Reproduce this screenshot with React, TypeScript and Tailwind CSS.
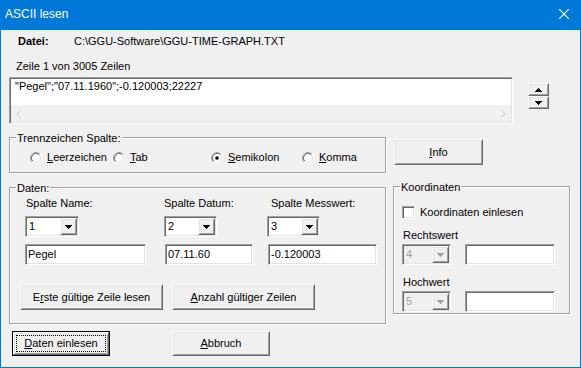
import React from "react";

const sunken =
  "border border-t-[#a0a0a0] border-l-[#a0a0a0] border-b-white border-r-white shadow-[inset_1px_1px_0_#696969,inset_-1px_-1px_0_#e3e3e3] p-[1px]";
const raised =
  "border border-t-white border-l-white border-b-[#696969] border-r-[#696969] shadow-[inset_1px_1px_0_#e3e3e3,inset_-1px_-1px_0_#a0a0a0]";

function Arrow({ up = false, color = "#000" }: { up?: boolean; color?: string }) {
  return (
    <svg width="7" height="4" viewBox="0 0 7 4" shapeRendering="crispEdges" className={up ? "rotate-180" : ""}>
      <path d="M0 0h7v1H0z M1 1h5v1H1z M2 2h3v1H2z M3 3h1v1H3z" fill={color} />
    </svg>
  );
}

function Radio({ checked = false }: { checked?: boolean }) {
  return (
    <svg width="12" height="12" viewBox="0 0 12 12" className="shrink-0">
      <circle cx="6" cy="6" r="4.5" fill="#fff" />
      <path d="M2.11 9.89A5.5 5.5 0 0 1 9.89 2.11" stroke="#a0a0a0" fill="none" />
      <path d="M9.89 2.11A5.5 5.5 0 0 1 2.11 9.89" stroke="#fff" fill="none" />
      <path d="M2.82 9.18A4.5 4.5 0 0 1 9.18 2.82" stroke="#696969" fill="none" />
      <path d="M9.18 2.82A4.5 4.5 0 0 1 2.82 9.18" stroke="#e3e3e3" fill="none" />
      {checked && <circle cx="6" cy="6" r="1.8" fill="#000" />}
    </svg>
  );
}

function Group({ label, className = "", children }: { label: string; className?: string; children?: React.ReactNode }) {
  return (
    <div className={`relative border border-[#a0a0a0] shadow-[inset_1px_1px_0_#fff,1px_1px_0_#fff] ${className}`}>
      <span className="absolute top-[-6px] left-[6px] px-[1px] bg-[#f0f0f0] leading-[13px] whitespace-nowrap">{label}</span>
      {children}
    </div>
  );
}

function Combo({ value, w, disabled = false, className = "" }: { value: string; w: string; disabled?: boolean; className?: string }) {
  return (
    <div className={`${sunken} ${w} h-[21px] flex ${disabled ? "bg-[#f0f0f0]" : "bg-white"} ${className}`}>
      <span className={`flex-1 pl-[2px] leading-[17px] ${disabled ? "text-[#a0a0a0]" : ""}`}>{value}</span>
      <div className={`${raised} w-[17px] h-[17px] bg-[#f0f0f0] flex items-center justify-center`}>
        <Arrow color={disabled ? "#a0a0a0" : "#000"} />
      </div>
    </div>
  );
}

function Field({ value = "", w, className = "" }: { value?: string; w: string; className?: string }) {
  return (
    <div className={`${sunken} ${w} h-[21px] bg-white pl-[2px] leading-[17px] ${className}`}>{value}</div>
  );
}

function Button({ children, w, h = "h-[25px]", className = "" }: { children: React.ReactNode; w: string; h?: string; className?: string }) {
  return (
    <div className={`${raised} ${w} ${h} bg-[#f0f0f0] flex items-center justify-center ${className}`}>{children}</div>
  );
}

function U({ children }: { children: React.ReactNode }) {
  return <span className="underline decoration-1 underline-offset-[1px]">{children}</span>;
}

export default function App() {
  return (
    <div className="w-[581px] h-[368px] bg-[#f0f0f0] border border-t-0 border-[#0078d7] flex flex-col overflow-hidden text-[11px] leading-[13px] text-black font-['Liberation_Sans',Arial,sans-serif]">
      {/* Title bar */}
      <div className="h-[30px] shrink-0 bg-[#0078d7] flex items-center justify-between pl-[4px] pr-[11px] pb-[2px] text-white">
        <span className="text-[12px] leading-[16px]">ASCII lesen</span>
        <svg width="10" height="10" viewBox="0 0 10 10">
          <path d="M0 0L10 10M10 0L0 10" stroke="#fff" strokeWidth="1.1" />
        </svg>
      </div>

      {/* Body */}
      <div className="flex flex-col pl-[8px]">
        {/* Datei */}
        <div className="mt-[5px] flex h-[13px] ml-[9px]">
          <span className="w-[56px] font-bold">Datei:</span>
          <span>C:\GGU-Software\GGU-TIME-GRAPH.TXT</span>
        </div>

        {/* Zeile */}
        <div className="mt-[12px] ml-[7px] h-[13px]">Zeile 1 von 3005 Zeilen</div>

        {/* Edit + spinner */}
        <div className="mt-[4px] flex items-start">
          <div className={`${sunken} w-[504px] h-[47px] bg-white flex flex-col`}>
            <div className="pl-[4px] pt-[1px] flex-1 whitespace-nowrap">"Pegel";"07.11.1960";-0.120003;22227</div>
            <div className="h-[17px] bg-[#f0f0f0] flex items-center justify-between px-[5px]">
              <svg width="5" height="8" viewBox="0 0 5 8">
                <path d="M4.5 0.5L1 4L4.5 7.5" stroke="#c4c4c4" fill="none" />
              </svg>
              <svg width="5" height="8" viewBox="0 0 5 8">
                <path d="M0.5 0.5L4 4L0.5 7.5" stroke="#c4c4c4" fill="none" />
              </svg>
            </div>
          </div>
          <div className="ml-[15px] mt-[6px] w-[21px] h-[26px] flex flex-col">
            <div className={`${raised} h-[13px] bg-[#f0f0f0] flex items-center justify-center`}>
              <Arrow up />
            </div>
            <div className={`${raised} h-[13px] bg-[#f0f0f0] flex items-center justify-center`}>
              <Arrow />
            </div>
          </div>
        </div>

        {/* Trennzeichen + Info */}
        <div className="mt-[13px] flex items-start">
          <Group label="Trennzeichen Spalte:" className="w-[377px] h-[36px]">
            <div className="pt-[13px] pl-[20px] flex h-[26px]">
              <div className="w-[83px] flex items-center gap-[5px]">
                <Radio />
                <span><U>L</U>eerzeichen</span>
              </div>
              <div className="w-[98px] flex items-center gap-[5px]">
                <Radio />
                <span><U>T</U>ab</span>
              </div>
              <div className="w-[91px] flex items-center gap-[5px]">
                <Radio checked />
                <span><U>S</U>emikolon</span>
              </div>
              <div className="flex items-center gap-[5px]">
                <Radio />
                <span><U>K</U>omma</span>
              </div>
            </div>
          </Group>
          <Button w="w-[89px]" h="h-[26px]" className="ml-[8px] mt-[2px]">
            <U>I</U>nfo
          </Button>
        </div>

        {/* Daten + Koordinaten */}
        <div className="mt-[14px] flex items-start">
          <Group label="Daten:" className="w-[377px] h-[137px]">
            <div className="flex pl-[15px]">
              <div className="w-[139px] flex flex-col">
                <span className="mt-[9px] ml-[1px]">Spalte Name:</span>
                <Combo value="1" w="w-[54px]" className="mt-[6px]" />
                <Field value="Pegel" w="w-[121px]" className="mt-[7px]" />
              </div>
              <div className="w-[103px] flex flex-col">
                <span className="mt-[9px]">Spalte Datum:</span>
                <Combo value="2" w="w-[53px]" className="mt-[6px]" />
                <Field value="07.11.60" w="w-[88px]" className="mt-[7px] ml-[1px]" />
              </div>
              <div className="flex flex-col">
                <span className="mt-[9px] ml-[4px]">Spalte Messwert:</span>
                <Combo value="3" w="w-[53px]" className="mt-[6px]" />
                <Field value="-0.120003" w="w-[109px]" className="mt-[7px] ml-[1px]" />
              </div>
            </div>
            <div className="mt-[19px] ml-[10px] flex gap-[9px]">
              <Button w="w-[143px]" h="h-[26px]">
                <span>E<U>r</U>ste gültige Zeile lesen</span>
              </Button>
              <Button w="w-[143px]" h="h-[26px]">
                <span><U>A</U>nzahl gültiger Zeilen</span>
              </Button>
            </div>
          </Group>

          <Group label="Koordinaten" className="ml-[7px] mt-[-1px] w-[177px] h-[128px]">
            <div className="flex flex-col pl-[8px]">
              <div className="mt-[19px] flex items-center gap-[5px] h-[13px]">
                <div className={`${sunken} w-[13px] h-[13px] bg-white`} />
                <span>Koordinaten einlesen</span>
              </div>
              <span className="mt-[10px] ml-[1px]">Rechtswert</span>
              <div className="mt-[2px] flex">
                <Combo value="4" w="w-[49px]" disabled />
                <Field w="w-[90px]" className="ml-[14px]" />
              </div>
              <span className="mt-[11px] ml-[1px]">Hochwert</span>
              <div className="mt-[2px] flex">
                <Combo value="5" w="w-[49px]" disabled />
                <Field w="w-[90px]" className="ml-[14px]" />
              </div>
            </div>
          </Group>
        </div>

        {/* Bottom buttons */}
        <div className="mt-[7px] flex">
          <div className="ml-[3px] w-[98px] h-[25px] border border-black">
            <div className={`${raised} h-full bg-[#f0f0f0] p-[2px]`}>
              <div className="h-full border border-dotted border-black flex items-center justify-center">
                <span><U>D</U>aten einlesen</span>
              </div>
            </div>
          </div>
          <Button w="w-[98px]" className="ml-[62px]">
            <span><U>A</U>bbruch</span>
          </Button>
        </div>
      </div>
    </div>
  );
}
